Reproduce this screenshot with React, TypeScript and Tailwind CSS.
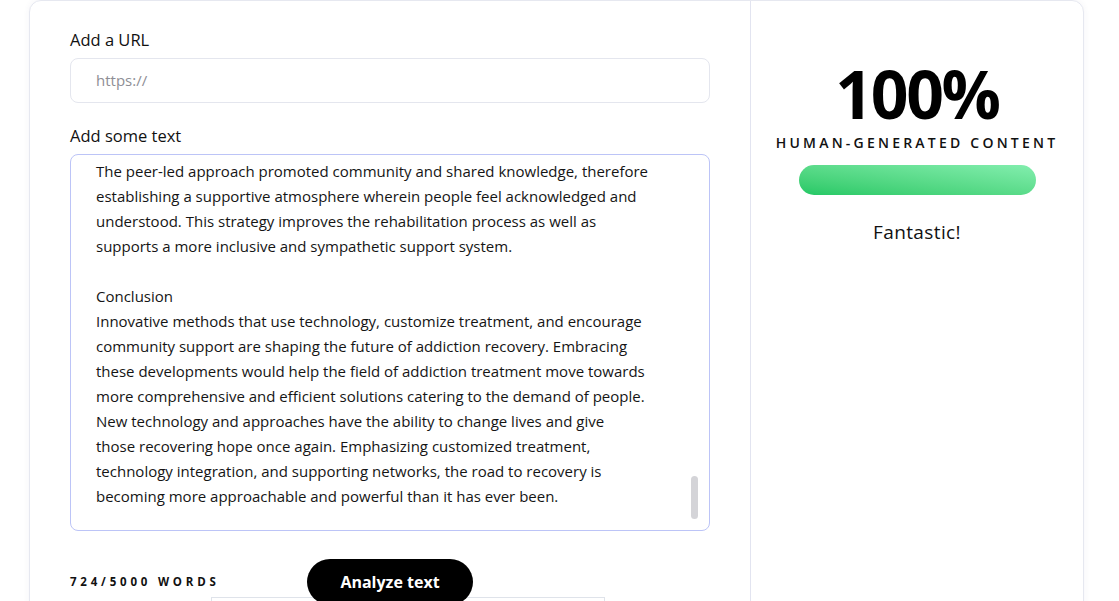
import * as React from "react";

const lines = [
  "The peer-led approach promoted community and shared knowledge, therefore",
  "establishing a supportive atmosphere wherein people feel acknowledged and",
  "understood. This strategy improves the rehabilitation process as well as",
  "supports a more inclusive and sympathetic support system.",
  "",
  "Conclusion",
  "Innovative methods that use technology, customize treatment, and encourage",
  "community support are shaping the future of addiction recovery. Embracing",
  "these developments would help the field of addiction treatment move towards",
  "more comprehensive and efficient solutions catering to the demand of people.",
  "New technology and approaches have the ability to change lives and give",
  "those recovering hope once again. Emphasizing customized treatment,",
  "technology integration, and supporting networks, the road to recovery is",
  "becoming more approachable and powerful than it has ever been.",
];

export default function App() {
  return (
    <div
      className="min-h-screen bg-white overflow-hidden"
      style={{ fontFamily: '"Open Sans", "Noto Sans", sans-serif' }}
    >
      <div className="ml-[29px] w-[1055px] h-[640px] flex border border-[#e6e8f0] rounded-[12px] bg-white shadow-[0_0_6px_rgba(60,70,120,0.06)]">
        {/* Left: input form */}
        <div className="w-[721px] shrink-0 px-[40px] pt-[29px] border-r border-[#e2e4f0]">
          <div className="text-[16.5px] font-medium text-[#111] leading-[20px]">Add a URL</div>
          <div className="mt-[8px] h-[45px] flex items-center px-[25px] border border-[#e4e6ee] rounded-[8px]">
            <span className="text-[15px] text-[#8e8e95]">https://</span>
          </div>

          <div className="mt-[23px] text-[16.5px] font-medium text-[#111] leading-[20px]">Add some text</div>
          <div className="relative mt-[8px] h-[377px] overflow-hidden border border-[#bcc4f7] rounded-[8px] pl-[25px] pt-[4px]">
            {lines.map((l, i) => (
              <div key={i} className="h-[25px] leading-[25px] text-[15px] text-[#151515] whitespace-nowrap">
                {l || "\u00a0"}
              </div>
            ))}
            <div className="absolute right-[11px] top-[321px] w-[7px] h-[43px] rounded-full bg-[#d4d4d8]" />
          </div>

          <div className="mt-[28px] flex items-center h-[46px]">
            <span className="w-[237px] text-[11.5px] font-bold tracking-[0.33em] text-[#111]">724/5000 WORDS</span>
            <button className="relative z-10 w-[166px] h-[46px] rounded-full bg-black text-white text-[16px] font-bold">
              Analyze text
            </button>
          </div>
          <div className="ml-[141px] -mt-[8px] w-[394px] h-[40px] border border-[#dfe3ea] bg-white" />
        </div>

        {/* Right: result */}
        <div className="flex-1 flex flex-col items-center pt-[62px]">
          <div className="text-[66px] font-bold leading-[60px] tracking-[-0.035em] text-black">100%</div>
          <div className="mt-[9px] text-[14px] font-semibold tracking-[0.23em] text-[#111]">HUMAN-GENERATED CONTENT</div>
          <div className="mt-[12px] w-[237px] h-[30px] rounded-full bg-gradient-to-tr from-[#22c865] to-[#82eeae]" />
          <div className="mt-[23px] text-[19px] tracking-[0.02em] text-[#111]">Fantastic!</div>
        </div>
      </div>
    </div>
  );
}
